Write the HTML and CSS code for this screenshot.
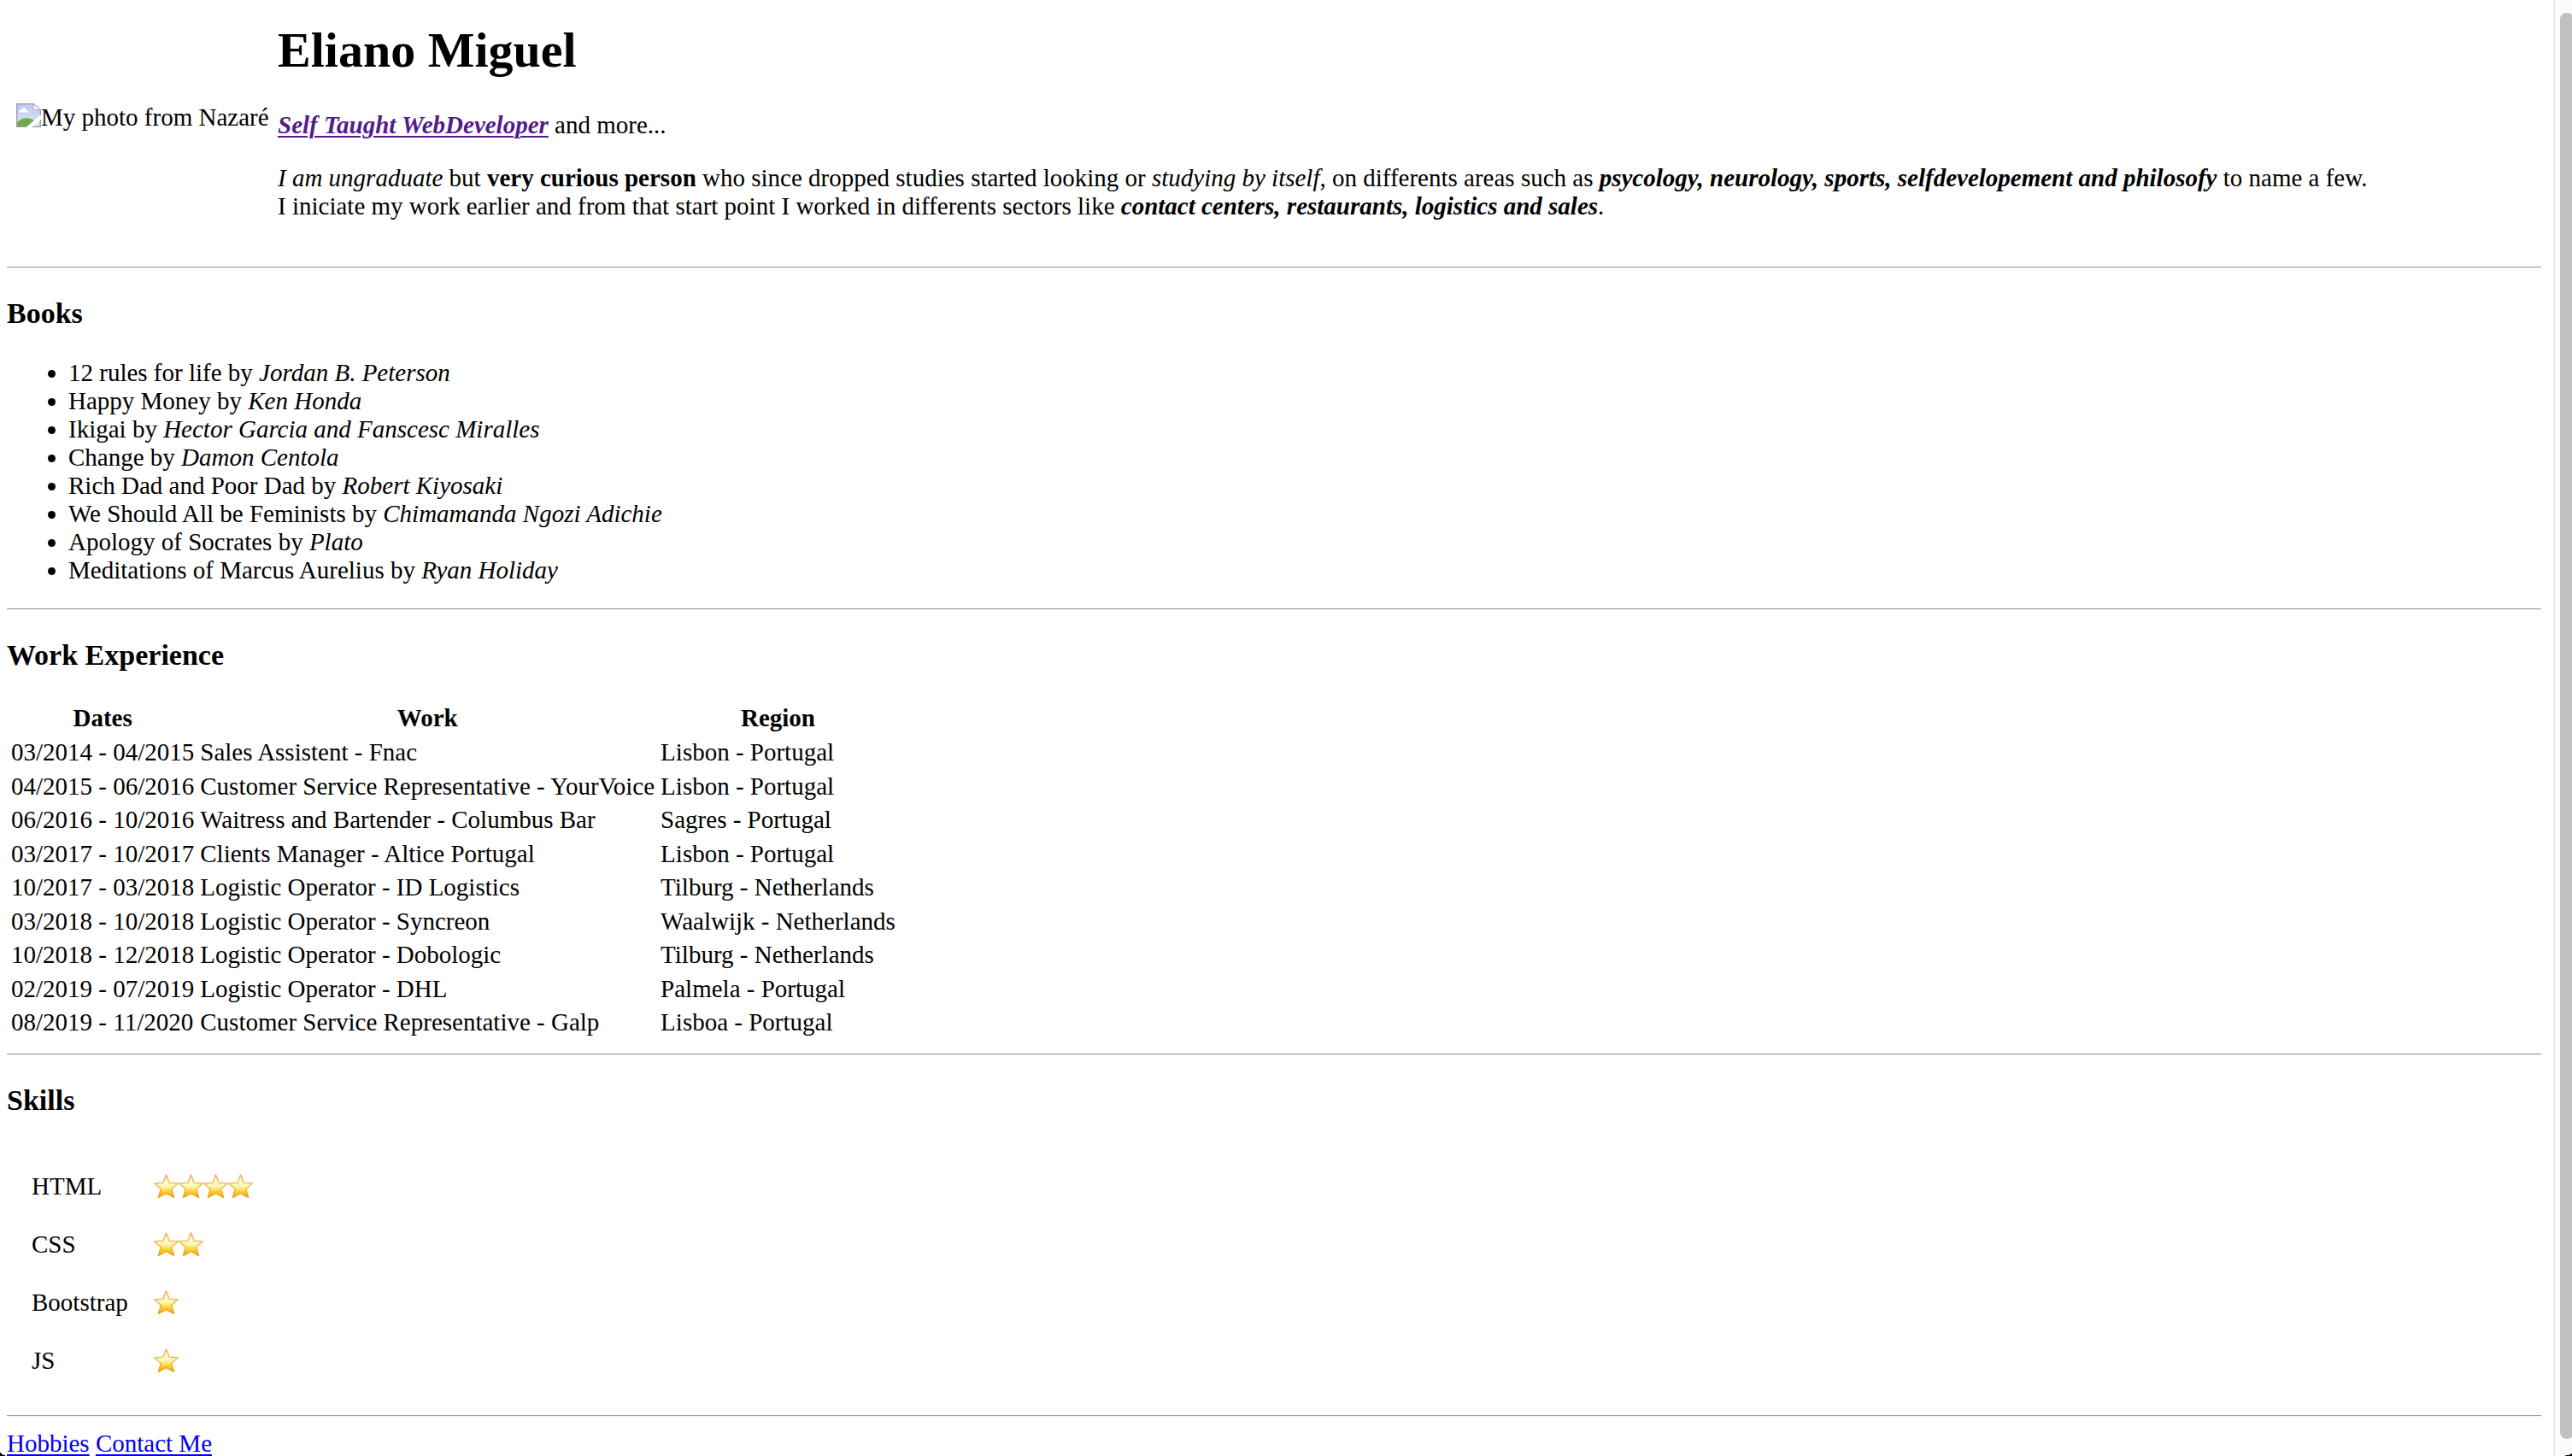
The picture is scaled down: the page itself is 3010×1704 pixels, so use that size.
FILE: index.html
```html
<!DOCTYPE html>
<html lang="en">
<head>
<meta charset="utf-8">
<title>Eliano Miguel</title>
<link rel="stylesheet" href="styles.css">
</head>
<body>
<svg class="defs" aria-hidden="true">
  <defs>
    <linearGradient id="gold" x1="0" y1="0" x2="0" y2="1">
      <stop offset="0" stop-color="#fff0b0"/>
      <stop offset=".3" stop-color="#fffcd6"/>
      <stop offset=".52" stop-color="#fff6ac"/>
      <stop offset=".75" stop-color="#fbd02c"/>
      <stop offset="1" stop-color="#f2a30f"/>
    </linearGradient>
    <linearGradient id="rim" x1="0" y1="0" x2="0" y2="1">
      <stop offset="0" stop-color="#f0a850"/>
      <stop offset=".5" stop-color="#f5b552"/>
      <stop offset="1" stop-color="#ee9a10"/>
    </linearGradient>
    <linearGradient id="sky" x1="0" y1="0" x2="0" y2="1">
      <stop offset="0" stop-color="#bccbf0"/>
      <stop offset="1" stop-color="#dbe4f8"/>
    </linearGradient>
    <symbol id="star" viewBox="0 0 29 29">
      <path d="M14.500 .8L18.100 10.200L28.500 10.800L20.800 17.500L23.600 27.400L14.500 22.600L5.400 27.400L8.200 17.500L.5 10.800L10.900 10.200Z" fill="url(#gold)" stroke="url(#rim)" stroke-width="1.300" stroke-linejoin="round"/>
    </symbol>
  </defs>
</svg>
<div class="window">
  <main class="page">
    <header class="intro">
      <div class="photo">
        <svg class="photo-icon" viewBox="0 0 29 28" aria-hidden="true">
          <path d="M1 1H20L28 8V27H1Z" fill="url(#sky)"/>
          <path d="M3 10.500Q3 8 6 7.500Q7 4.500 9.500 5Q12 5.500 12 8Q14.500 8.500 14.500 10.500Z" fill="#fff"/>
          <path d="M1 27V22Q6 17 13 17.200Q18 18 21 20L13 27Z" fill="#70ab4b"/>
          <path d="M11.500 28L29 13V19L19 28Z" fill="#fff"/>
          <path d="M12.500 27.300H.7V.7H20.200L28.300 7.500V14M28.300 19V27.300H19" fill="none" stroke="#9a9a9a" stroke-width="1.200"/>
          <path d="M20.200 .7V7.500H28.300Z" fill="#fff" stroke="#a5a5a5"/>
        </svg><span>My photo from Nazaré</span>
      </div>
      <div class="bio">
        <h1>Eliano Miguel</h1>
        <p><a class="visited" href="#about"><strong><em>Self Taught WebDeveloper</em></strong></a> and more...</p>
        <p><em>I am ungraduate</em> but <strong>very curious person</strong> who since dropped studies started looking or <em>studying by itself</em>, on differents areas such as <strong><em>psycology, neurology, sports, selfdevelopement and philosofy</em></strong> to name a few.<br>
        I iniciate my work earlier and from that start point I worked in differents sectors like <strong><em>contact centers, restaurants, logistics and sales</em></strong>.</p>
      </div>
    </header>
    <hr>
    <h2>Books</h2>
    <ul class="books">
      <li>12 rules for life by <em>Jordan B. Peterson</em></li>
      <li>Happy Money by <em>Ken Honda</em></li>
      <li>Ikigai by <em>Hector Garcia and Fanscesc Miralles</em></li>
      <li>Change by <em>Damon Centola</em></li>
      <li>Rich Dad and Poor Dad by <em>Robert Kiyosaki</em></li>
      <li>We Should All be Feminists by <em>Chimamanda Ngozi Adichie</em></li>
      <li>Apology of Socrates by <em>Plato</em></li>
      <li>Meditations of Marcus Aurelius by <em>Ryan Holiday</em></li>
    </ul>
    <hr>
    <h2>Work Experience</h2>
    <table class="work">
      <thead>
        <tr><th>Dates</th><th>Work</th><th>Region</th></tr>
      </thead>
      <tbody>
        <tr><td>03/2014 - 04/2015</td><td>Sales Assistent - Fnac</td><td>Lisbon - Portugal</td></tr>
        <tr><td>04/2015 - 06/2016</td><td>Customer Service Representative - YourVoice</td><td>Lisbon - Portugal</td></tr>
        <tr><td>06/2016 - 10/2016</td><td>Waitress and Bartender - Columbus Bar</td><td>Sagres - Portugal</td></tr>
        <tr><td>03/2017 - 10/2017</td><td>Clients Manager - Altice Portugal</td><td>Lisbon - Portugal</td></tr>
        <tr><td>10/2017 - 03/2018</td><td>Logistic Operator - ID Logistics</td><td>Tilburg - Netherlands</td></tr>
        <tr><td>03/2018 - 10/2018</td><td>Logistic Operator - Syncreon</td><td>Waalwijk - Netherlands</td></tr>
        <tr><td>10/2018 - 12/2018</td><td>Logistic Operator - Dobologic</td><td>Tilburg - Netherlands</td></tr>
        <tr><td>02/2019 - 07/2019</td><td>Logistic Operator - DHL</td><td>Palmela - Portugal</td></tr>
        <tr><td>08/2019 - 11/2020</td><td>Customer Service Representative - Galp</td><td>Lisboa - Portugal</td></tr>
      </tbody>
    </table>
    <hr>
    <h2>Skills</h2>
    <table class="skills">
      <tbody>
        <tr><td>HTML</td><td><div class="stars" role="img" aria-label="4 stars"><svg><use href="#star"/></svg><svg><use href="#star"/></svg><svg><use href="#star"/></svg><svg><use href="#star"/></svg></div></td></tr>
        <tr><td>CSS</td><td><div class="stars" role="img" aria-label="2 stars"><svg><use href="#star"/></svg><svg><use href="#star"/></svg></div></td></tr>
        <tr><td>Bootstrap</td><td><div class="stars" role="img" aria-label="1 star"><svg><use href="#star"/></svg></div></td></tr>
        <tr><td>JS</td><td><div class="stars" role="img" aria-label="1 star"><svg><use href="#star"/></svg></div></td></tr>
      </tbody>
    </table>
    <hr>
    <footer><a href="#hobbies">Hobbies</a> <a href="#contact">Contact Me</a></footer>
  </main>
  <div class="scrollbar" aria-hidden="true"><div class="thumb"></div></div>
  <span class="corner corner-left"></span>
  <span class="corner corner-right"></span>
</div>
</body>
</html>
```
FILE: styles.css
```css
* { box-sizing: border-box; }

body {
  margin: 0;
  background: #fff;
  color: #000;
  font: 29px/33px "Liberation Serif", "Times New Roman", serif;
}

.defs { position: absolute; width: 0; height: 0; }

.window {
  position: relative;
  display: grid;
  grid-template-columns: minmax(0, 1fr) 22px;
  height: 100vh;
  overflow: hidden;
}

.page { padding: 0 14px 0 8px; }

a { color: #0000ee; text-decoration: underline; text-decoration-thickness: 2px; text-underline-offset: 3px; }
a.visited { color: #551a8b; }

/* Introduction */
.intro { display: flex; align-items: center; gap: 12px; margin-bottom: 37px; padding-left: 11px; }
.photo { display: flex; flex: 0 0 294px; min-width: 0; white-space: nowrap; }
.photo-icon { flex: none; width: 29px; height: 28px; }
.bio { padding: 26px 0 17px; }
h1 { margin: 0 0 38px; font-size: 58px; line-height: 66px; }
p { margin: 0; }
p + p { margin-top: 29px; }

hr { height: 2px; margin: 12px 0 15px; border: 0; border-top: 1px solid #9a9a9a; border-bottom: 1px solid #eee; }
h2 { margin: 34px 0 33px; font-size: 34px; line-height: 38px; }

.books { margin: 34px 0 28px; padding-left: 72px; }

/* Tables */
.work { margin-bottom: 15px; border-spacing: 3px; }
.work th, .work td { padding: 2px; }
.work tbody tr:nth-child(even) td { padding-bottom: 1px; }

.skills { margin: 48px 0 29px; border-spacing: 0; }
.skills td { padding: 17px 0 18px 29px; }
.stars { display: flex; padding-left: 1px; }
.stars svg { width: 29px; height: 29px; }

/* Window edge */
.scrollbar { padding: 15px 0 22px 6px; border-left: 2px solid #e8e8e8; background: #fafafa; overflow: hidden; }
.thumb { width: 16px; height: 100%; border-radius: 8px; background: #c1c1c1; }
.corner { position: absolute; bottom: 0; overflow: hidden; }
.corner-left { left: 0; width: 10px; height: 6px; background: radial-gradient(ellipse 10px 6px at 100% 0, transparent 98%, #000); }
.corner-right { right: 0; width: 14px; height: 4px; background: radial-gradient(ellipse 14px 4px at 0 0, transparent 98%, #000); }
```
